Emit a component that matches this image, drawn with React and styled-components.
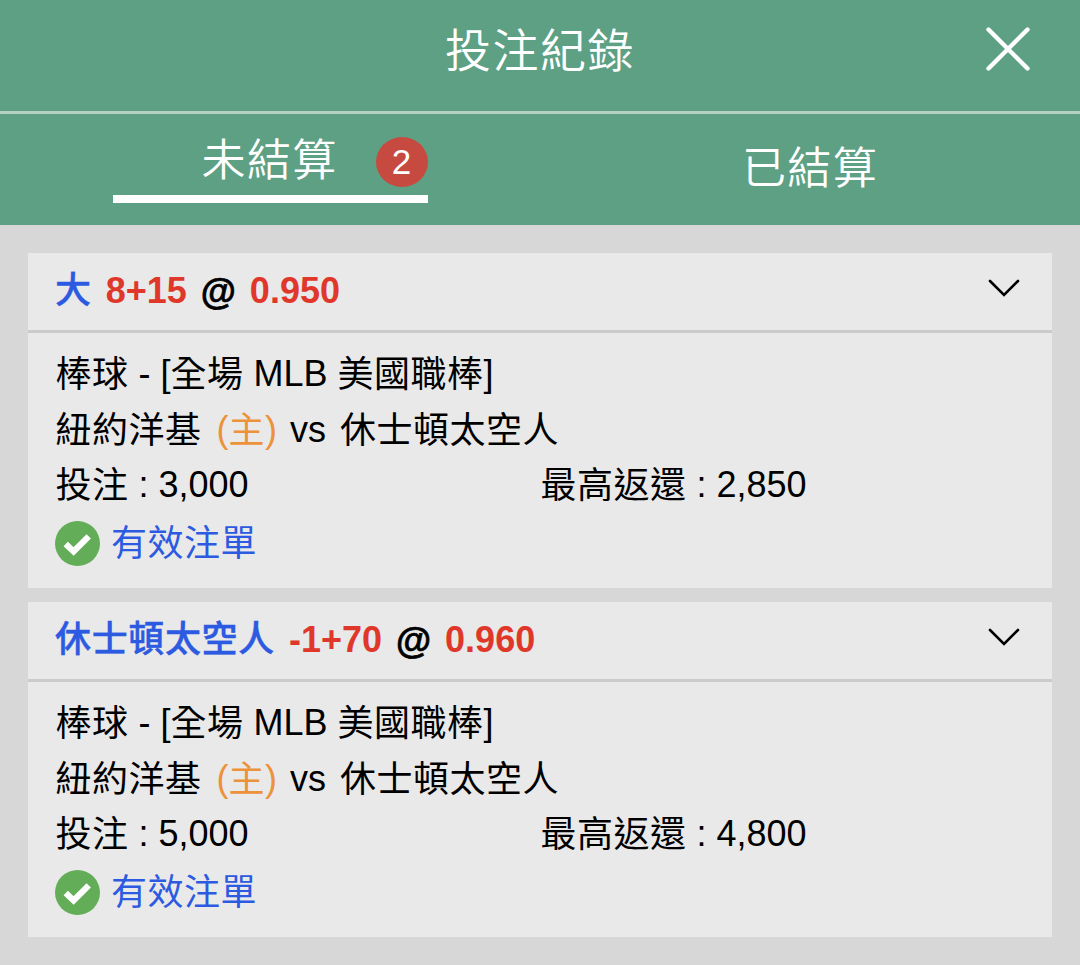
import React from "react";
import styled, { createGlobalStyle } from "styled-components";

const bets = [
  {
    id: 1,
    pick: "大",
    line: "8+15",
    odds: "0.950",
    stake: "3,000",
    payout: "2,850",
  },
  {
    id: 2,
    pick: "休士頓太空人",
    line: "-1+70",
    odds: "0.960",
    stake: "5,000",
    payout: "4,800",
  },
];

const BetCard = ({ bet }) => (
  <Card>
    <CardHeader>
      <Selection>
        <Pick>{bet.pick}</Pick>
        <Odds>{bet.line}</Odds>
        <At>@</At>
        <Odds>{bet.odds}</Odds>
      </Selection>
      <Chevron viewBox="0 0 32 18">
        <path d="M2 2 L16 16 L30 2" />
      </Chevron>
    </CardHeader>
    <CardBody>
      <Line>
        <Han>棒球</Han> - [<Han>全場</Han> MLB <Han>美國職棒</Han>]
      </Line>
      <Line>
        <Han>紐約洋基</Han>
        <Home>
          (<Han>主</Han>)
        </Home>
        vs
        <Away>休士頓太空人</Away>
      </Line>
      <Line $split>
        <div>
          <Han>投注</Han> : {bet.stake}
        </div>
        <div>
          <Han>最高返還</Han> : {bet.payout}
        </div>
      </Line>
      <Status>
        <Check viewBox="0 0 44 44">
          <circle cx="22" cy="22" r="22" />
          <path d="M10.5 22.5 L18.2 29.8 L33 15" />
        </Check>
        <StatusText>有效注單</StatusText>
      </Status>
    </CardBody>
  </Card>
);

const App = () => {
  return (
    <>
      <GlobalStyle />
      <TopBar>
        <Title>投注紀錄</Title>
        <Close viewBox="0 0 44 44">
          <path d="M2.5 2.5 L41.5 41.5 M41.5 2.5 L2.5 41.5" />
        </Close>
      </TopBar>
      <Tabs>
        <Tab>
          <ActiveTab>
            <TabLabel>未結算</TabLabel>
            <Count>2</Count>
          </ActiveTab>
        </Tab>
        <Tab>
          <TabLabel>已結算</TabLabel>
        </Tab>
      </Tabs>
      <List>
        {bets.map((bet) => (
          <BetCard key={bet.id} bet={bet} />
        ))}
      </List>
    </>
  );
};

export default App;

const GlobalStyle = createGlobalStyle`
  * {
    box-sizing: border-box;
  }
  body {
    margin: 0;
    background: #d7d7d7;
    color: #000;
    font: 36px/56px "Liberation Sans", "Noto Sans CJK TC", sans-serif;
  }
`;

const TopBar = styled.header`
  position: relative;
  height: 114px;
  padding-top: 11px;
  background: #5da084;
  border-bottom: 3px solid #b5d1c4;
  text-align: center;
`;

const Title = styled.h1`
  margin: 0;
  color: #fff;
  font: 350 46px/72px "Noto Sans CJK TC", sans-serif;
  letter-spacing: 1.5px;
`;

const Close = styled.svg`
  position: absolute;
  top: 27px;
  right: 50px;
  width: 44px;
  height: 44px;
  fill: none;
  stroke: #fff;
  stroke-width: 4.4;
  stroke-linecap: round;
`;

const Tabs = styled.nav`
  display: grid;
  grid-template-columns: 1fr 1fr;
  height: 111px;
  background: #5da084;
`;

const Tab = styled.div`
  display: flex;
  align-items: center;
  justify-content: center;
`;

const ActiveTab = styled.div`
  display: flex;
  align-items: center;
  justify-content: flex-end;
  width: 315px;
  height: 67px;
  padding-bottom: 8px;
  border-bottom: 8px solid #fff;
`;

const TabLabel = styled.span`
  margin-bottom: 9px;
  color: #fff;
  font: 350 44px/60px "Noto Sans CJK TC", sans-serif;
  letter-spacing: 1.3px;
`;

const Count = styled.span`
  width: 52px;
  height: 50px;
  margin-left: 38px;
  border-radius: 50%;
  background: #c74a41;
  color: #fff;
  font-size: 35px;
  line-height: 49px;
  text-align: center;
`;

const List = styled.main`
  display: flex;
  flex-direction: column;
  gap: 14px;
  padding: 28px;
`;

const Card = styled.section`
  height: 335px;
  background: #e9e9e9;
`;

const CardHeader = styled.div`
  display: flex;
  align-items: center;
  justify-content: space-between;
  height: 80px;
  padding: 0 32px 0 27px;
  border-bottom: 3px solid #cbcbcb;
`;

const Selection = styled.div`
  display: flex;
  font-weight: bold;
`;

const Han = styled.span`
  letter-spacing: 0.5px;
  vertical-align: -1px;
`;

const Pick = styled(Han)`
  margin-right: 14px;
  color: #2c5ae0;
  font-weight: 500;
  letter-spacing: 0.65px;
  -webkit-text-stroke: 0.4px #2c5ae0;
`;

const Odds = styled.span`
  color: #df382b;
`;

const At = styled.span`
  margin: 0 14px;
  padding-top: 1px;
  -webkit-text-stroke: 0.7px #000;
`;

const Chevron = styled.svg`
  width: 32px;
  height: 18px;
  margin-top: -7px;
  fill: none;
  stroke: #000;
  stroke-width: 2.6;
  stroke-linecap: round;
`;

const CardBody = styled.div`
  padding: 13px 28px 0 27px;
`;

const Line = styled.div`
  height: 55.5px;
  padding-left: 0.5px;
  white-space: nowrap;
  ${({ $split }) => $split && "display: grid; grid-template-columns: 485px 1fr;"}
`;

const Home = styled.span`
  margin: 0 13px 0 15px;
  color: #ec923a;
`;

const Away = styled(Han)`
  margin-left: 14px;
`;

const Status = styled.div`
  display: flex;
  align-items: center;
  height: 61px;
  color: #2c5ae0;
`;

const StatusText = styled(Han)`
  padding-top: 2px;
`;

const Check = styled.svg`
  width: 45px;
  height: 45px;
  margin-right: 11px;
  fill: #63ad58;

  path {
    fill: none;
    stroke: #fff;
    stroke-width: 6;
  }
`;
